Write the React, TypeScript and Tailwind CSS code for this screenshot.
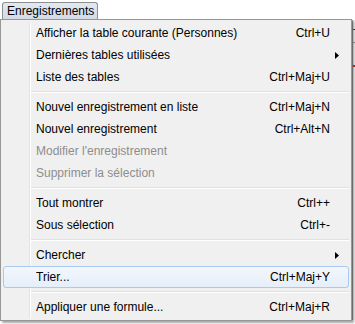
import { Fragment } from "react";

type Item =
  | { kind: "sep" }
  | {
      kind: "item";
      label: string;
      shortcut?: string;
      submenu?: boolean;
      disabled?: boolean;
      active?: boolean;
    };

const items: Item[] = [
  { kind: "item", label: "Afficher la table courante (Personnes)", shortcut: "Ctrl+U" },
  { kind: "item", label: "Dernières tables utilisées", submenu: true },
  { kind: "item", label: "Liste des tables", shortcut: "Ctrl+Maj+U" },
  { kind: "sep" },
  { kind: "item", label: "Nouvel enregistrement en liste", shortcut: "Ctrl+Maj+N" },
  { kind: "item", label: "Nouvel enregistrement", shortcut: "Ctrl+Alt+N" },
  { kind: "item", label: "Modifier l'enregistrement", disabled: true },
  { kind: "item", label: "Supprimer la sélection", disabled: true },
  { kind: "sep" },
  { kind: "item", label: "Tout montrer", shortcut: "Ctrl++" },
  { kind: "item", label: "Sous sélection", shortcut: "Ctrl+-" },
  { kind: "sep" },
  { kind: "item", label: "Chercher", submenu: true },
  { kind: "item", label: "Trier...", shortcut: "Ctrl+Maj+Y", active: true },
  { kind: "sep" },
  { kind: "item", label: "Appliquer une formule...", shortcut: "Ctrl+Maj+R" },
];

function Arrow() {
  return (
    <svg width="4" height="7" viewBox="0 0 4 7" className="block">
      <path d="M0 0 L4 3.5 L0 7 Z" fill="#000" />
    </svg>
  );
}

export default function App() {
  return (
    <div className="relative h-[324px] w-[355px] overflow-hidden bg-white font-['Liberation_Sans',sans-serif] text-[12px] text-black">
      {/* app window peeking out behind the menu */}
      <div className="absolute left-[352px] top-[20px] h-[300px] w-[3px] border-l border-[#a0a0a0] bg-[#f0f0f0]">
        <div className="mt-[9px] h-px bg-[#444]" />
        <div className="mt-[12px] h-px bg-[#999]" />
        <div className="mt-[22px] h-[2px] w-[2px] bg-[#c0392b]" />
      </div>

      <div className="ml-[2px] mt-[2px] flex h-[17px] w-[96px] items-center rounded-t-[3px] border border-b-0 border-[#8e8f8f] bg-[linear-gradient(#e3e8f0,#d3dae5)] pl-[4px]">
        Enregistrements
      </div>

      <div className="relative w-[352px] border border-[#979797] bg-[#f0f0f0] p-[2px] shadow-[2px_2px_2px_rgba(0,0,0,0.35)]">
        {/* icon gutter line */}
        <div className="absolute bottom-[2px] left-[28px] top-[2px] w-px bg-[#e2e3e3]" />
        <div className="absolute bottom-[2px] left-[29px] top-[2px] w-px bg-white" />
        {items.map((it, i) => (
          <Fragment key={i}>
            {it.kind === "sep" ? (
              <div className="ml-[28px] flex h-[8px] flex-col justify-center">
                <div className="h-px bg-[#e0e0e0]" />
                <div className="h-px bg-white" />
              </div>
            ) : (
              <div
                className={`relative flex h-[22px] items-center rounded-[3px] border pl-[32px] pr-[18px] ${
                  it.active
                    ? "border-[#a8caf0] bg-[linear-gradient(#f3f7fc,#e6eefa)]"
                    : "border-transparent"
                } ${it.disabled ? "text-[#8d8d8d]" : "text-black"}`}
              >
                <span className="flex-1">{it.label}</span>
                {it.shortcut && <span>{it.shortcut}</span>}
                {it.submenu && (
                  <span className="absolute right-[9px] top-[7px]">
                    <Arrow />
                  </span>
                )}
              </div>
            )}
          </Fragment>
        ))}
      </div>
    </div>
  );
}
